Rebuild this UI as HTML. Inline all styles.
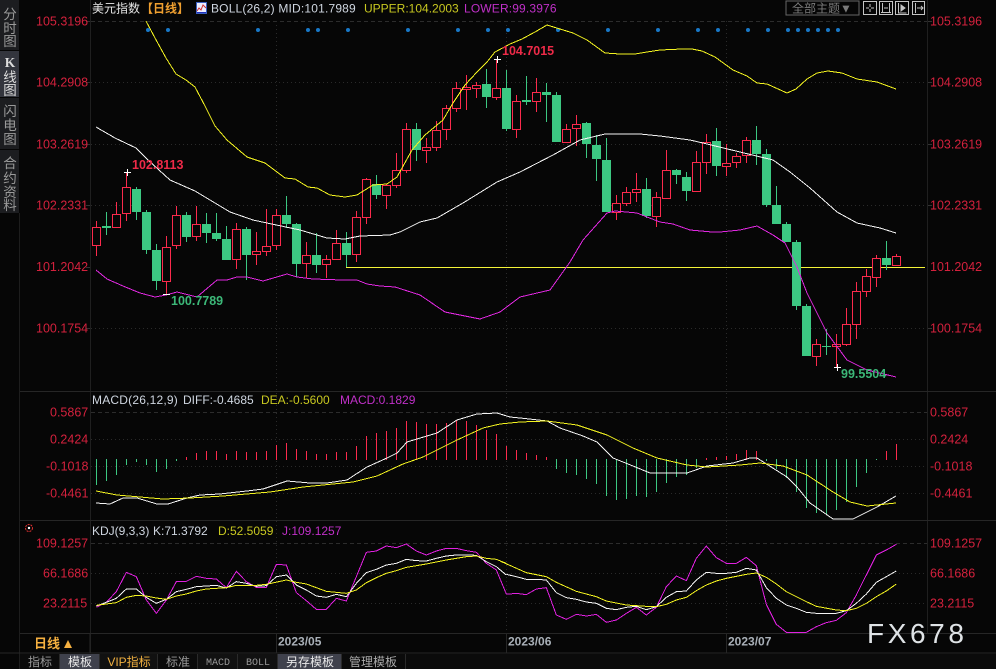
<!DOCTYPE html>
<html><head><meta charset="utf-8"><style>
html,body{margin:0;padding:0;background:#060606;width:996px;height:669px;overflow:hidden}
svg{display:block;font-family:"Liberation Sans","Noto Sans CJK SC",sans-serif}
.ax{fill:#d4213d;font-size:12.5px}
.h{font-size:12px}
.t{font-size:12px;text-anchor:middle;fill:#999}
.s{font-size:13.5px;text-anchor:middle;fill:#9a9a9a}
.d{font-size:12px;font-weight:bold;fill:#a9b0b8}
polyline{shape-rendering:crispEdges}
</style></head><body>
<svg width="996" height="669" viewBox="0 0 996 669" xmlns="http://www.w3.org/2000/svg">
<rect width="996" height="669" fill="#060606"/>
<!-- sidebar -->
<rect x="0" y="0" width="19" height="50" fill="#1c1d20"/>
<rect x="0" y="51" width="19" height="46" fill="#33353d"/>
<rect x="0" y="98" width="19" height="51" fill="#1c1d20"/>
<rect x="0" y="150" width="19" height="63" fill="#1c1d20"/>
<path d="M19.5 213V669" stroke="#1d1d1d"/>
<g class="s">
<text class="s" x="10" y="19">分</text><text class="s" x="10" y="33">时</text><text class="s" x="10" y="46">图</text>
<text class="s" x="10" y="67" style="fill:#ddd;font-family:'Liberation Serif';font-weight:bold">K</text><text class="s" x="10" y="82" style="fill:#ddd">线</text><text class="s" x="10" y="95" style="fill:#ddd">图</text>
<text class="s" x="10" y="116">闪</text><text class="s" x="10" y="130">电</text><text class="s" x="10" y="144">图</text>
<text class="s" x="10" y="168">合</text><text class="s" x="10" y="183">约</text><text class="s" x="10" y="197">资</text><text class="s" x="10" y="210">料</text>
</g>
<!-- frame and grid -->
<g stroke="#1f1f1f" fill="none">
<path d="M90.5 0V653M927.5 0V633"/>
</g>
<g stroke="#262626" fill="none">
<path d="M20 391.5H996M20 520.5H996M20 633.5H996M0 653H996"/>
<path d="M90 633V653"/>
</g>
<g stroke="#2c2c2c" fill="none" stroke-dasharray="4 3">
<path d="M91 21.5H927M91 412.5H927M91 543.5H927"/>
</g>
<g stroke="#2a2a2a" fill="none" stroke-dasharray="1 3">
<path d="M91 82.5H927M91 144.5H927M91 205.5H927M91 328.5H927M91 439.5H927M91 466.5H927M91 493.5H927M91 573.5H927M91 603.5H927"/>
<path d="M276.5 21V633M506.5 21V633M726.5 21V633"/>
</g>
<g stroke="#333" fill="none"><path d="M86 21.5h4M86 82.5h4M86 144.5h4M86 205.5h4M86 267.5h4M86 328.5h4M928 21.5h4M928 82.5h4M928 144.5h4M928 205.5h4M928 328.5h4"/></g>
<!-- axis labels -->
<g class="ax">
<text class="ax" x="36" y="25.5">105.3196</text><text class="ax" x="36" y="86.5">104.2908</text><text class="ax" x="36" y="148.5">103.2619</text><text class="ax" x="36" y="209.5">102.2331</text><text class="ax" x="36" y="271">101.2042</text><text class="ax" x="36" y="332.5">100.1754</text>
<text class="ax" x="930" y="25.5">105.3196</text><text class="ax" x="930" y="86.5">104.2908</text><text class="ax" x="930" y="148.5">103.2619</text><text class="ax" x="930" y="209.5">102.2331</text><text class="ax" x="930" y="271">101.2042</text><text class="ax" x="930" y="332.5">100.1754</text>
<text class="ax" x="50" y="416.5">0.5867</text><text class="ax" x="50" y="443.5">0.2424</text><text class="ax" x="46" y="470.5">-0.1018</text><text class="ax" x="46" y="497.5">-0.4461</text>
<text class="ax" x="930" y="416.5">0.5867</text><text class="ax" x="930" y="443.5">0.2424</text><text class="ax" x="930" y="470.5">-0.1018</text><text class="ax" x="930" y="497.5">-0.4461</text>
<text class="ax" x="36" y="547.5">109.1257</text><text class="ax" x="43" y="577.5">66.1686</text><text class="ax" x="43" y="607.5">23.2115</text>
<text class="ax" x="930" y="547.5">109.1257</text><text class="ax" x="930" y="577.5">66.1686</text><text class="ax" x="930" y="607.5">23.2115</text>
</g>
<!-- header -->
<text class="h" x="92" y="12.5" fill="#e8e8e8">美元指数</text>
<text class="h" x="141" y="12.5" fill="#f0a030" font-weight="bold">【日线】</text>
<rect x="196.5" y="2.5" width="10" height="11" fill="#eef" stroke="#3a5fc0"/>
<path d="M197 11l2-3 2 2 2-5 3 3" stroke="#d03030" fill="none"/><path d="M197 12.5h9" stroke="#2030c0"/>
<text class="h" x="211" y="12.5" fill="#cfd6e0" letter-spacing=".18">BOLL(26,2) MID:101.7989</text>
<text class="h" x="364" y="12.5" fill="#c8c820">UPPER:104.2003</text>
<text class="h" x="464" y="12.5" fill="#c030c8" letter-spacing=".15">LOWER:99.3976</text>
<rect x="786" y="1" width="73" height="14" fill="none" stroke="#666"/>
<text class="h" x="792" y="12.5" fill="#7a7a7a">全部主题▼</text>
<g fill="none" stroke="#c4c4c4">
<rect x="863.5" y="1.5" width="13" height="13"/><rect x="879.5" y="1.5" width="13" height="13"/><rect x="895.5" y="1.5" width="13" height="13"/><rect x="912.5" y="1.5" width="12" height="13"/>
<path d="M870 4v3M870 9v3M866 8h3M871 8h3"/>
<path d="M882.5 3v9M889.5 3v9M881 12.5h10M884 8h4"/>
<path d="M898.5 3v10h8"/><path d="M901 5v6l4-3z" fill="#c4c4c4"/>
<path d="M915.5 3v10M917 8h6M921 6l2 2-2 2"/>
</g>
<!-- blue dots -->
<g fill="#1878c8">
<circle cx="148" cy="30" r="2"/><circle cx="168" cy="30" r="2"/><circle cx="258" cy="30" r="2"/><circle cx="308" cy="30" r="2"/><circle cx="318" cy="30" r="2"/><circle cx="348" cy="30" r="2"/><circle cx="408" cy="30" r="2"/><circle cx="458" cy="30" r="2"/><circle cx="488" cy="30" r="2"/><circle cx="508" cy="30" r="2"/><circle cx="558" cy="30" r="2"/><circle cx="608" cy="30" r="2"/><circle cx="658" cy="30" r="2"/><circle cx="698" cy="30" r="2"/><circle cx="718" cy="30" r="2"/><circle cx="748" cy="30" r="2"/><circle cx="768" cy="30" r="2"/><circle cx="788" cy="30" r="2"/><circle cx="798" cy="30" r="2"/><circle cx="808" cy="30" r="2"/><circle cx="818" cy="30" r="2"/><circle cx="828" cy="30" r="2"/><circle cx="838" cy="30" r="2"/>
</g>
<!-- horizontal line -->
<path d="M346 267.5H925" stroke="#f4f438" fill="none" shape-rendering="crispEdges"/>
<!-- green wicks -->
<path shape-rendering="crispEdges" stroke="#3cc882" fill="none" d="M106.5 212V235M136.5 187V220M146.5 210V254M156.5 244V290M186.5 212V242M206.5 213V243M216.5 213V241M226.5 226V260M246.5 227V280M286.5 196V228M296.5 223V277M316.5 233V273M346.5 232V267M376.5 175V199M416.5 123V161M486.5 69V108M506.5 70V131M526.5 76V105M546.5 83V122M556.5 92V142M586.5 122V158M596.5 135V181M606.5 138V212M646.5 178V218M676.5 169V184M686.5 172V201M716.5 128V176M756.5 126V165M766.5 149V207M776.5 186V224M786.5 222V242M796.5 240V310M806.5 304V356M826.5 329V355M886.5 241V270"/>
<!-- green bodies -->
<path shape-rendering="crispEdges" fill="#3cc882" d="M102 226h9v2h-9zM132 189h9v23h-9zM142 212h9v38h-9zM152 250h9v31h-9zM182 215h9v22h-9zM202 224h9v9h-9zM212 233h9v6h-9zM222 239h9v21h-9zM242 229h9v26h-9zM282 215h9v9h-9zM292 224h9v40h-9zM312 255h9v10h-9zM342 243h9v12h-9zM372 184h9v11h-9zM412 129h9v21h-9zM482 84h9v13h-9zM502 88h9v41h-9zM522 100h9v2h-9zM542 92h9v3h-9zM552 95h9v47h-9zM582 123h9v21h-9zM592 145h9v14h-9zM602 160h9v52h-9zM642 189h9v27h-9zM672 170h9v5h-9zM682 177h9v14h-9zM712 141h9v25h-9zM752 140h9v14h-9zM762 154h9v51h-9zM772 205h9v19h-9zM782 224h9v18h-9zM792 242h9v64h-9zM802 306h9v50h-9zM822 346h9v1h-9zM882 258h9v7h-9z"/>
<!-- red wicks -->
<path shape-rendering="crispEdges" stroke="#fb2a4c" fill="none" d="M96.5 221V256M116.5 202V227M126.5 172V221M166.5 236V294M176.5 206V249M196.5 206V241M236.5 223V269M256.5 232V265M266.5 209V256M276.5 209V250M306.5 242V278M326.5 255V278M336.5 230V259M356.5 211V262M366.5 178V224M386.5 184V209M396.5 153V188M406.5 123V173M426.5 138V163M436.5 121V151M446.5 105V140M456.5 82V112M466.5 75V110M476.5 82V98M496.5 59V100M516.5 95V138M536.5 78V112M566.5 124V142M576.5 115V146M616.5 195V220M626.5 187V206M636.5 173V202M656.5 192V227M666.5 150V198M696.5 151V192M706.5 134V174M726.5 144V176M736.5 153V168M746.5 137V163M816.5 339V366M836.5 334V367M846.5 308V346M856.5 282V339M866.5 269V297M876.5 255V287M896.5 254V265"/>
<!-- red bodies -->
<path shape-rendering="crispEdges" stroke="#fb2a4c" fill="#060606" d="M92.5 227.5h8v18h-8zM112.5 214.5h8v13h-8zM122.5 187.5h8v26h-8zM162.5 247.5h8v34h-8zM172.5 215.5h8v30h-8zM192.5 224.5h8v12h-8zM232.5 229.5h8v30h-8zM252.5 251.5h8v3h-8zM262.5 246.5h8v5h-8zM272.5 215.5h8v30h-8zM302.5 255.5h8v8h-8zM322.5 259.5h8v5h-8zM332.5 243.5h8v16h-8zM352.5 217.5h8v37h-8zM362.5 179.5h8v38h-8zM382.5 185.5h8v10h-8zM392.5 170.5h8v15h-8zM402.5 129.5h8v41h-8zM422.5 147.5h8v3h-8zM432.5 130.5h8v17h-8zM442.5 108.5h8v21h-8zM452.5 88.5h8v20h-8zM462.5 87.5h8v2h-8zM472.5 85.5h8v3h-8zM492.5 88.5h8v9h-8zM512.5 101.5h8v28h-8zM532.5 92.5h8v9h-8zM562.5 129.5h8v13h-8zM572.5 124.5h8v4h-8zM612.5 203.5h8v9h-8zM622.5 192.5h8v11h-8zM632.5 189.5h8v3h-8zM652.5 197.5h8v19h-8zM662.5 170.5h8v28h-8zM692.5 162.5h8v29h-8zM702.5 142.5h8v20h-8zM722.5 163.5h8v3h-8zM732.5 156.5h8v6h-8zM742.5 140.5h8v15h-8zM812.5 344.5h8v12h-8zM832.5 344.5h8v2h-8zM842.5 324.5h8v20h-8zM852.5 291.5h8v33h-8zM862.5 276.5h8v15h-8zM872.5 258.5h8v19h-8zM892.5 256.5h8v9h-8z"/>
<!-- BOLL lines -->
<polyline fill="none" stroke="#f4f420" points="146,21 155,38 166,58 176,74 186,80 195,87 205,106 215,126 227,140 247,157 265,163 285,178 295,179 308,187 317,188 330,195 345,197 357,195 373,185 387,184 397,177 402,168 412,150 425,135 443,120 453,103 465,85 477,72 487,62 495,52 510,44 522,39 535,32 547,25 560,29 573,33 587,40 605,53 620,54 635,54 647,52 660,50 682,49 692,49 702,51 715,57 733,70 747,76 757,83 767,84 787,93 796,89 807,79 817,73 828,71 842,73 857,79 877,82 896,89"/>
<polyline fill="none" stroke="#f4f4f4" points="96,127 115,138 136,148 148,160 170,180 195,191 210,200 230,212 253,220 267,223 300,230 327,238 345,239 360,236 390,235 400,232 420,222 437,218 463,203 497,182 520,172 553,155 580,140 605,134 640,134 660,136 690,140 707,144 740,152 773,160 790,172 810,188 837,212 857,223 880,228 896,233"/>
<polyline fill="none" stroke="#e028e0" points="96,270 107,279 123,286 140,293 155,297 166,295 177,292 197,297 217,280 227,280 237,277 247,277 263,281 287,274 297,277 313,279 342,280 357,280 367,284 380,286 395,287 420,295 445,312 480,319 500,312 520,297 550,290 570,262 583,240 607,213 615,211 637,213 647,217 660,222 673,224 690,230 712,232 720,232 740,230 757,226 773,235 785,243 797,267 807,293 827,333 847,360 867,370 896,377"/>
<!-- extremes -->
<g stroke="#fff" fill="none"><path d="M124 172.5h7M127.5 169v7M494 59.5h7M497.5 56v7M163 294.5h7M834 367.5h7M837.5 364v7"/></g>
<text x="132" y="169" fill="#ee2a48" font-size="12.5" font-weight="bold">102.8113</text>
<text x="502" y="55" fill="#ee2a48" font-size="12.5" font-weight="bold">104.7015</text>
<text x="171" y="305" fill="#3cb878" font-size="12.5" font-weight="bold">100.7789</text>
<text x="841" y="378" fill="#3cb878" font-size="12.5" font-weight="bold">99.5504</text>
<!-- MACD -->
<text class="h" x="92" y="404" fill="#cfd6e0" letter-spacing=".2">MACD(26,12,9)</text>
<text class="h" x="183" y="404" fill="#cfd6e0">DIFF:-0.4685</text>
<text class="h" x="261" y="404" fill="#c8c820">DEA:-0.5600</text>
<text class="h" x="340" y="404" fill="#c030c8">MACD:0.1829</text>
<path shape-rendering="crispEdges" stroke="#3cc882" fill="none" d="M96.5 459V485M106.5 459V481M116.5 459V475M126.5 459V465M136.5 459V462M146.5 459V465M156.5 459V472M166.5 459V469M176.5 459V461M556.5 459V469M566.5 459V473M576.5 459V475M586.5 459V479M596.5 459V484M606.5 459V496M616.5 459V500M626.5 459V499M636.5 459V496M646.5 459V497M656.5 459V492M666.5 459V483M676.5 459V477M686.5 459V475M696.5 459V468M766.5 459V461M776.5 459V469M786.5 459V478M796.5 459V492M806.5 459V508M816.5 459V513M826.5 459V514M836.5 459V510M846.5 459V502M856.5 459V487M866.5 459V473M876.5 459V460"/>
<path shape-rendering="crispEdges" stroke="#fb2a4c" fill="none" d="M186.5 457V460M196.5 453V460M206.5 451V460M216.5 451V460M226.5 454V460M236.5 451V460M246.5 452V460M256.5 452V460M266.5 451V460M276.5 445V460M286.5 443V460M296.5 449V460M306.5 451V460M316.5 454V460M326.5 454V460M336.5 452V460M346.5 452V460M356.5 446V460M366.5 436V460M376.5 433V460M386.5 431V460M396.5 428V460M406.5 421V460M416.5 422V460M426.5 424V460M436.5 424V460M446.5 423V460M456.5 420V460M466.5 421V460M476.5 425V460M486.5 430V460M496.5 434V460M506.5 446V460M516.5 450V460M526.5 453V460M536.5 455V460M546.5 457V460M706.5 458V460M716.5 457V460M726.5 456V460M736.5 454V460M746.5 450V460M756.5 451V460M886.5 451V460M896.5 444V460"/>
<polyline fill="none" stroke="#f4f4f4" points="96,503 110,504 123,498 137,498 157,504 168,504 187,498 200,495 220,494 247,491 263,489 287,481 310,483 327,483 347,480 367,467 387,458 397,453 407,442 437,433 457,420 477,414 497,413 510,417 520,418 547,421 560,428 583,436 597,442 613,458 633,466 650,473 667,473 687,473 707,466 733,463 750,458 757,458 787,477 797,487 810,503 833,519 853,519 877,507 896,496"/>
<polyline fill="none" stroke="#f4f420" points="96,491 117,495 140,497 163,499 190,498 223,496 270,492 303,487 353,482 377,476 403,464 423,457 457,440 483,428 500,424 520,422 547,421 577,425 607,435 633,448 657,458 687,465 707,467 740,465 760,463 783,466 807,475 833,492 850,502 867,506 896,503"/>
<!-- KDJ -->
<text class="h" x="92" y="535" fill="#cfd6e0">KDJ(9,3,3)</text>
<text class="h" x="153" y="535" fill="#cfd6e0">K:71.3792</text>
<text class="h" x="218" y="535" fill="#c8c820">D:52.5059</text>
<text class="h" x="282" y="535" fill="#c030c8">J:109.1257</text>
<circle cx="29" cy="528" r="3.5" fill="none" stroke="#e03030" stroke-dasharray="2 1"/><circle cx="29" cy="528" r="1.2" fill="#fff"/>
<g transform="translate(90,520) scale(.33333)" fill="none" stroke-width="3">
<polyline stroke="#e020e0" points="19,262 49,247 79,215 109,157 139,170 169,240 199,280 229,240 259,185 289,184 319,169 349,175 379,177 409,203 439,154 469,185 499,202 529,202 559,133 589,135 619,218 649,242 679,268 709,268 739,235 769,243 799,170 829,97 859,93 889,78 919,83 949,72 979,93 1009,105 1039,93 1069,85 1099,85 1129,92 1159,97 1189,130 1219,150 1249,222"/>
<polyline stroke="#f4f4f4" points="19,258 49,247 79,235 109,207 139,207 169,232 199,250 229,238 259,215 289,208 319,200 349,198 379,196 409,204 439,185 469,190 499,199 529,197 559,170 589,165 619,195 649,210 679,228 709,232 739,223 769,230 799,190 829,158 859,148 889,135 919,130 949,118 979,122 1009,123 1039,115 1069,108 1099,105 1129,105 1159,106 1189,125 1219,140 1249,165"/>
<polyline stroke="#f4f420" points="19,256 79,248 109,232 139,226 169,228 199,234 229,238 259,228 289,222 319,213 349,207 409,203 439,196 499,196 529,193 589,180 619,187 649,192 679,203 709,214 739,217 769,220 799,210 829,188 859,173 889,160 919,152 949,142 1009,132 1069,120 1129,110 1159,108 1189,115 1219,118 1249,130"/>
</g>
<g transform="translate(500,520) scale(.33333)" fill="none" stroke-width="3">
<polyline stroke="#e020e0" points="19,223 49,220 79,224 109,207 139,203 169,285 199,298 229,283 259,288 289,283 319,307 349,300 379,280 409,262 439,285 469,262 499,200 529,168 559,182 589,115 619,78 649,113 679,130 709,130 739,112 769,137 799,253 829,313 859,337 889,337 919,337 949,320 979,308 1009,301 1039,278 1069,225 1099,165 1129,105 1159,90 1189,73"/>
<polyline stroke="#f4f4f4" points="19,163 49,170 79,178 109,178 139,180 169,218 199,233 229,238 259,246 289,250 319,265 349,269 379,262 409,259 439,269 469,260 499,232 529,215 559,213 589,180 619,157 649,160 679,160 709,157 739,145 769,150 799,203 829,235 859,255 889,265 919,277 949,280 979,280 1009,280 1039,272 1069,250 1099,222 1129,187 1159,170 1189,153"/>
<polyline stroke="#f4f420" points="0,123 79,158 139,170 169,187 229,214 289,230 319,243 379,255 439,259 469,260 499,253 529,240 559,232 589,212 619,195 649,183 679,175 739,163 769,159 799,172 829,192 859,215 919,245 949,259 1009,270 1039,272 1069,265 1099,250 1129,230 1159,213 1189,192"/>
</g>
<!-- date row -->
<text x="34" y="648" fill="#f5b040" font-size="13" font-weight="bold">日线</text>
<path d="M64 648l4-8 4 8z" fill="#f5b040"/>
<path d="M276.5 633v20M506.5 633v20M726.5 633v20" stroke="#262626" fill="none"/>
<text class="d" x="278" y="645.5">2023/05</text>
<text class="d" x="508" y="645.5">2023/06</text>
<text class="d" x="728" y="645.5">2023/07</text>
<text x="867" y="643" fill="#dfe3e6" font-size="28" letter-spacing="3.6">FX678</text>
<!-- bottom tabs -->
<rect x="20" y="654" width="976" height="15" fill="#0b0b0b"/>
<rect x="60" y="654" width="39" height="15" fill="#3f414c"/>
<rect x="278" y="654" width="63" height="15" fill="#3f414c"/>
<rect x="100" y="654" width="58" height="15" fill="#111"/><rect x="198" y="654" width="39" height="15" fill="#111"/><rect x="238" y="654" width="39" height="15" fill="#111"/>
<path d="M59.5 654v15M99.5 654v15M157.5 654v15M197.5 654v15M237.5 654v15M277.5 654v15M341.5 654v15M405.5 654v15" stroke="#2a2a2a" fill="none"/>
<text class="t" x="40" y="666">指标</text>
<text class="t" x="80" y="666" style="fill:#e8e8e8">模板</text>
<text class="t" x="129" y="666" style="fill:#f0b040">VIP指标</text>
<text class="t" x="178" y="666">标准</text>
<text class="t" x="218" y="665" style="font-family:'Liberation Mono';font-size:10px">MACD</text>
<text class="t" x="258" y="665" style="font-family:'Liberation Mono';font-size:10px">BOLL</text>
<text class="t" x="310" y="666" style="fill:#e8e8e8">另存模板</text>
<text class="t" x="373" y="666" style="fill:#aaa">管理模板</text>
</svg>
</body></html>
